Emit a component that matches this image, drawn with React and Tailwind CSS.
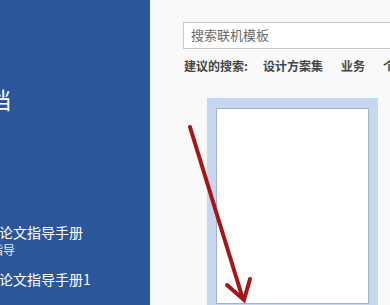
export default function App() {
  return (
    <div
      className="flex w-[390px] h-[305px] overflow-hidden"
      style={{ fontFamily: '"Noto Sans CJK SC", "Noto Sans", sans-serif' }}
    >
      {/* Left blue pane */}
      <div className="w-[150px] shrink-0 bg-[#2b579a] text-white flex flex-col">
        <div className="mt-[84px] ml-[-12px] text-[23px] leading-[30px] whitespace-nowrap">档</div>
        <div className="mt-[109px] ml-[-1px] text-[14px] leading-[18px] whitespace-nowrap">论文指导手册</div>
        <div className="ml-[-9px] text-[12px] leading-[17px] whitespace-nowrap text-[#e6ecf5]">指导</div>
        <div className="mt-[12px] ml-[-1px] text-[14px] leading-[18px] whitespace-nowrap">论文指导手册1</div>
      </div>

      {/* Right content */}
      <div className="relative flex-1 bg-[#f9f9f9] flex flex-col pl-[33px]">
        <div className="mt-[22px] h-[27px] w-[260px] shrink-0 border border-[#c8c8c8] bg-white flex items-center pl-[7px] text-[13px] text-[#6a6a6a]">
          <span className="mt-[-2px]">搜索联机模板</span>
        </div>
        <div className="mt-[9px] flex items-center text-[12px] leading-[16px] font-bold text-[#444] whitespace-nowrap">
          <span className="ml-[1px]">建议的搜索:</span>
          <span className="ml-[15px]">设计方案集</span>
          <span className="ml-[18px]">业务</span>
          <span className="ml-[18px]">个人</span>
        </div>

        {/* Template thumbnail */}
        <div className="mt-[24px] ml-[24px] w-[171px] h-[220px] shrink-0 bg-[#c6d7f1] pt-[10px] pl-[9px]">
          <div className="w-[153px] h-[196px] bg-white border border-[#a9b2c2]" />
        </div>

        {/* Red annotation arrow */}
        <svg className="absolute left-0 top-0" width="240" height="305" viewBox="150 0 240 305">
          <line x1="190" y1="127" x2="242" y2="296" stroke="#a3161a" strokeWidth="4" strokeLinecap="round" />
          <path d="M227 285 L244 300 L250 279" fill="none" stroke="#a3161a" strokeWidth="4" strokeLinejoin="miter" strokeLinecap="round" />
        </svg>
      </div>
    </div>
  );
}
